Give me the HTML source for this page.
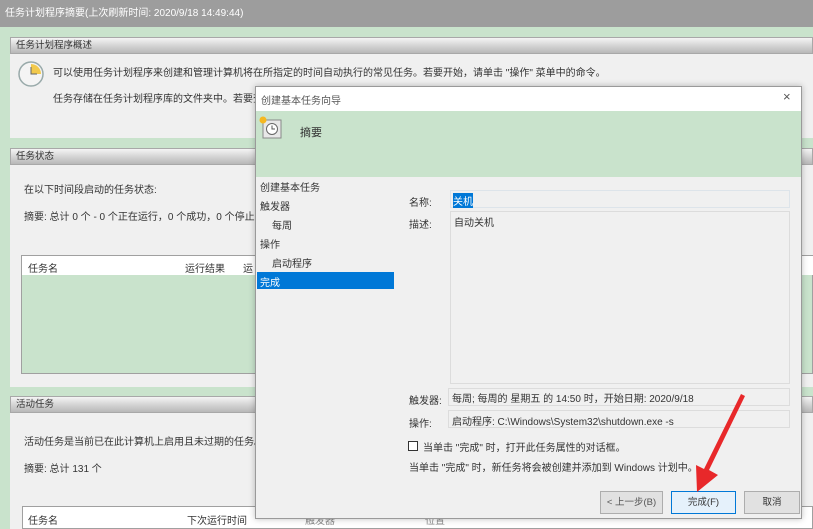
<!DOCTYPE html>
<html><head><meta charset="utf-8"><style>
*{margin:0;padding:0;box-sizing:border-box}
body{width:813px;height:529px;overflow:hidden;background:#c9e3cc;font-family:"Liberation Sans","Noto Sans CJK SC",sans-serif;font-size:10px;color:#333;position:relative}
.a{position:absolute}
.hdr{background:linear-gradient(#f4f4f4,#cfcfcf 60%,#b8b8b8);border:1px solid #a8a8a8;height:17px;line-height:15px;padding-left:5px;font-size:9.5px;color:#333}
.t{position:absolute;white-space:nowrap}
.box{background:#f0f0f0;border:1px solid #dcdcdc}
.btn{position:absolute;height:23px;background:#e1e1e1;border:1px solid #adadad;text-align:center;line-height:21px;font-size:9.5px}
</style></head><body>
<div class="a" style="left:0;top:0;width:813px;height:27px;background:#9d9d9d"></div>
<div class="t" style="left:5px;top:4px;color:#fff;font-size:10px">任务计划程序摘要(上次刷新时间: 2020/9/18 14:49:44)</div>

<!-- section 1 -->
<div class="a hdr" style="left:10px;top:37px;width:803px">任务计划程序概述</div>
<div class="a" style="left:10px;top:54px;width:803px;height:84px;background:#f0f0f0"></div>
<svg class="a" style="left:17px;top:60px" width="28" height="28"><circle cx="14" cy="14" r="12" fill="#f4f4f4" stroke="#9aa" stroke-width="1.5"/><path d="M14 14 L14 4 A10 10 0 0 1 24 14Z" fill="#f2c94c"/><path d="M14 7V14H20" stroke="#666" fill="none"/></svg>
<div class="t" style="left:53px;top:64px">可以使用任务计划程序来创建和管理计算机将在所指定的时间自动执行的常见任务。若要开始，请单击 "操作" 菜单中的命令。</div>
<div class="t" style="left:53px;top:90px">任务存储在任务计划程序库的文件夹中。若要查看</div>

<!-- section 2 -->
<div class="a hdr" style="left:10px;top:148px;width:803px">任务状态</div>
<div class="a" style="left:10px;top:165px;width:803px;height:222px;background:#f0f0f0"></div>
<div class="t" style="left:24px;top:181px">在以下时间段启动的任务状态:</div>
<div class="t" style="left:24px;top:208px">摘要: 总计 0 个 - 0 个正在运行，0 个成功，0 个停止，</div>
<div class="a" style="left:21px;top:255px;width:792px;height:119px;background:#c9e3cc;border:1px solid #a0a0a0"></div>
<div class="a" style="left:22px;top:256px;width:791px;height:19px;background:#fff"></div>
<div class="t" style="left:28px;top:260px">任务名</div>
<div class="t" style="left:185px;top:260px">运行结果</div>
<div class="t" style="left:243px;top:260px">运</div>

<!-- section 3 -->
<div class="a hdr" style="left:10px;top:396px;width:803px">活动任务</div>
<div class="a" style="left:10px;top:413px;width:803px;height:116px;background:#f0f0f0"></div>
<div class="t" style="left:24px;top:433px">活动任务是当前已在此计算机上启用且未过期的任务。</div>
<div class="t" style="left:24px;top:460px">摘要: 总计 131 个</div>
<div class="a" style="left:22px;top:506px;width:791px;height:23px;background:#fff;border:1px solid #a0a0a0"></div>
<div class="t" style="left:28px;top:512px">任务名</div>
<div class="t" style="left:187px;top:512px">下次运行时间</div>
<div class="t" style="left:305px;top:512px;color:#888">触发器</div>
<div class="t" style="left:425px;top:512px;color:#888">位置</div>

<!-- dialog -->
<div class="a" style="left:255px;top:86px;width:547px;height:433px;background:#f0f0f0;border:1px solid #9a9a9a;box-shadow:0 0 6px rgba(0,0,0,.25)"></div>
<div class="a" style="left:256px;top:87px;width:545px;height:24px;background:#fff"></div>
<div class="t" style="left:261px;top:92px;color:#555">创建基本任务向导</div>
<div class="t" style="left:783px;top:89px;font-size:13px;color:#555">×</div>
<div class="a" style="left:256px;top:111px;width:545px;height:66px;background:#c9e3cc"></div>
<svg class="a" style="left:258px;top:115px" width="26" height="26"><rect x="5" y="5" width="18" height="18" fill="#e8e8e8" stroke="#888"/><circle cx="14" cy="14" r="5.5" fill="#fff" stroke="#666"/><path d="M14 10.5V14H17" stroke="#555" fill="none"/><circle cx="5" cy="5" r="3.5" fill="#f5b820"/></svg>
<div class="t" style="left:300px;top:124px;font-size:11px">摘要</div>

<div class="t" style="left:260px;top:179px">创建基本任务</div>
<div class="t" style="left:260px;top:198px">触发器</div>
<div class="t" style="left:272px;top:217px">每周</div>
<div class="t" style="left:260px;top:236px">操作</div>
<div class="t" style="left:272px;top:255px">启动程序</div>
<div class="a" style="left:257px;top:272px;width:137px;height:17px;background:#0078d7"></div>
<div class="t" style="left:260px;top:274px;color:#fff">完成</div>

<div class="t" style="left:409px;top:194px">名称:</div>
<div class="a" style="left:450px;top:190px;width:340px;height:18px;border:1px solid #dde4ea;background:#f0f0f0"></div>
<div class="t" style="left:453px;top:193px;background:#0078d7;color:#fff">关机</div>
<div class="t" style="left:409px;top:216px">描述:</div>
<div class="a" style="left:450px;top:211px;width:340px;height:173px;border:1px solid #dcdcdc;background:#f0f0f0"></div>
<div class="t" style="left:454px;top:214px">自动关机</div>
<div class="t" style="left:409px;top:392px">触发器:</div>
<div class="a" style="left:448px;top:388px;width:342px;height:18px;border:1px solid #dcdcdc"></div>
<div class="t" style="left:452px;top:390px">每周; 每周的 星期五 的 14:50 时，开始日期: 2020/9/18</div>
<div class="t" style="left:409px;top:415px">操作:</div>
<div class="a" style="left:448px;top:410px;width:342px;height:18px;border:1px solid #dcdcdc"></div>
<div class="t" style="left:452px;top:413px">启动程序: C:\Windows\System32\shutdown.exe -s</div>
<div class="a" style="left:408px;top:441px;width:10px;height:10px;border:1px solid #333;background:#fff"></div>
<div class="t" style="left:423px;top:439px">当单击 "完成" 时，打开此任务属性的对话框。</div>
<div class="t" style="left:409px;top:459px">当单击 "完成" 时，新任务将会被创建并添加到 Windows 计划中。</div>

<div class="btn" style="left:600px;top:491px;width:63px;color:#555">&lt; 上一步(B)</div>
<div class="btn" style="left:671px;top:491px;width:65px;border:1px solid #0078d7;background:#e5f1fb">完成(F)</div>
<div class="btn" style="left:744px;top:491px;width:56px">取消</div>

<svg class="a" style="left:0;top:0" width="813" height="529"><polygon points="741,394 745,396 709,470 718,475 697,492 696,465 704,469" fill="#e8282a"/></svg>
</body></html>
